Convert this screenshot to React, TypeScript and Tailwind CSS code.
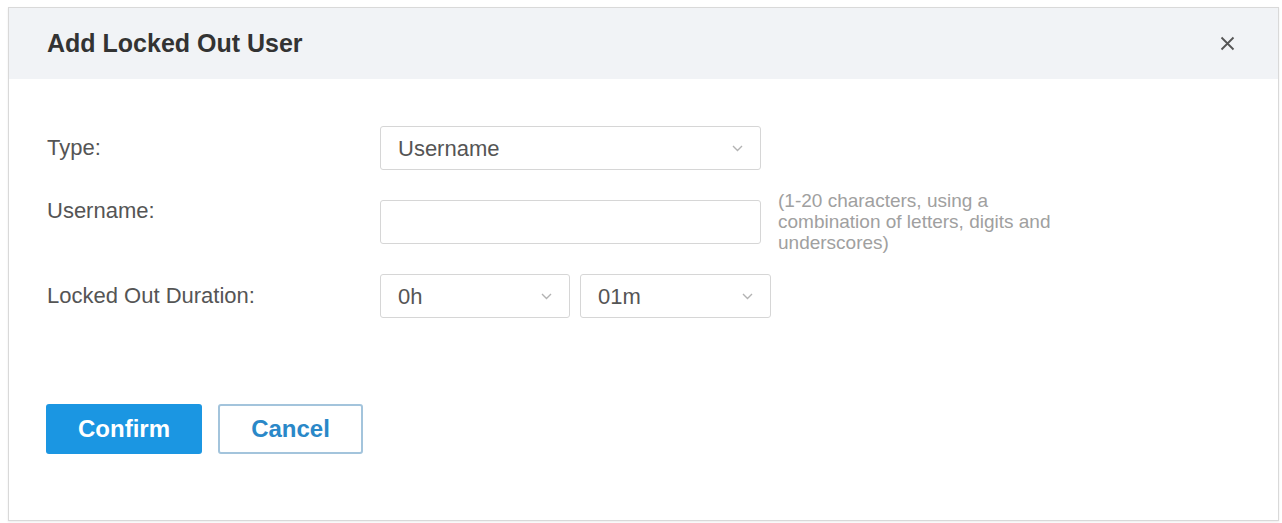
import { useState } from "react";

function Chevron() {
  return (
    <svg className="h-[7px] w-[11px] shrink-0" viewBox="0 0 11 7" fill="none" stroke="#b3b3b3" strokeWidth={1.4}>
      <path d="M1 1l4.5 4.5L10 1" />
    </svg>
  );
}

function Select({ value, className }: { value: string; className: string }) {
  return (
    <div
      className={`flex h-[44px] items-center justify-between rounded-[3px] border border-[#d6d6d6] bg-white pl-[17px] pr-[17px] text-[22px] text-[#555] ${className}`}
    >
      <span>{value}</span>
      <Chevron />
    </div>
  );
}

export default function App() {
  const [username, setUsername] = useState("");

  return (
    <div className="h-[523px] w-[1282px] bg-white pl-[8px] pt-[7px] font-['Liberation_Sans',Arial,sans-serif]">
      <div className="flex h-[514px] w-[1271px] flex-col border border-[#d9d9d9] bg-white shadow-[0_1px_2px_rgba(0,0,0,0.08)]">
        {/* Header */}
        <div className="flex h-[71px] shrink-0 items-center justify-between bg-[#f1f3f6] pl-[38px] pr-[43px]">
          <h2 className="text-[25px] font-bold text-[#333]">Add Locked Out User</h2>
          <button className="text-[#555]">
            <svg className="h-[15px] w-[15px]" viewBox="0 0 15 15" stroke="currentColor" strokeWidth={1.8} fill="none">
              <path d="M1.5 1.5l12 12M13.5 1.5l-12 12" />
            </svg>
          </button>
        </div>

        {/* Form */}
        <div className="flex flex-col pl-[38px] pt-[47px]">
          <div className="flex items-start">
            <label className="w-[333px] shrink-0 text-[22px] leading-[44px] text-[#555]">Type:</label>
            <Select value="Username" className="w-[381px]" />
          </div>

          <div className="mt-[20px] flex h-[63px] items-center">
            <label className="w-[333px] shrink-0 self-start text-[22px] leading-[42px] text-[#555]">Username:</label>
            <input
              value={username}
              onChange={(e) => setUsername(e.target.value)}
              className="h-[44px] w-[381px] rounded-[3px] border border-[#d6d6d6] bg-white px-[17px] text-[22px] text-[#555] outline-none"
            />
            <p className="ml-[17px] w-[292px] text-[19px] leading-[21px] text-[#a0a0a0]">
              (1-20 characters, using a combination of letters, digits and underscores)
            </p>
          </div>

          <div className="mt-[21px] flex items-start">
            <label className="w-[333px] shrink-0 text-[22px] leading-[44px] text-[#555]">Locked Out Duration:</label>
            <Select value="0h" className="w-[190px]" />
            <Select value="01m" className="ml-[10px] w-[191px]" />
          </div>

          <div className="mt-[86px] flex gap-[16px]">
            <button className="-ml-px h-[50px] w-[156px] rounded-[3px] bg-[#1b96e2] text-[24px] font-bold text-white">
              Confirm
            </button>
            <button className="h-[50px] w-[145px] rounded-[3px] border-2 border-[#a3c4dc] bg-white text-[24px] font-bold text-[#2a88c8]">
              Cancel
            </button>
          </div>
        </div>
      </div>
    </div>
  );
}
